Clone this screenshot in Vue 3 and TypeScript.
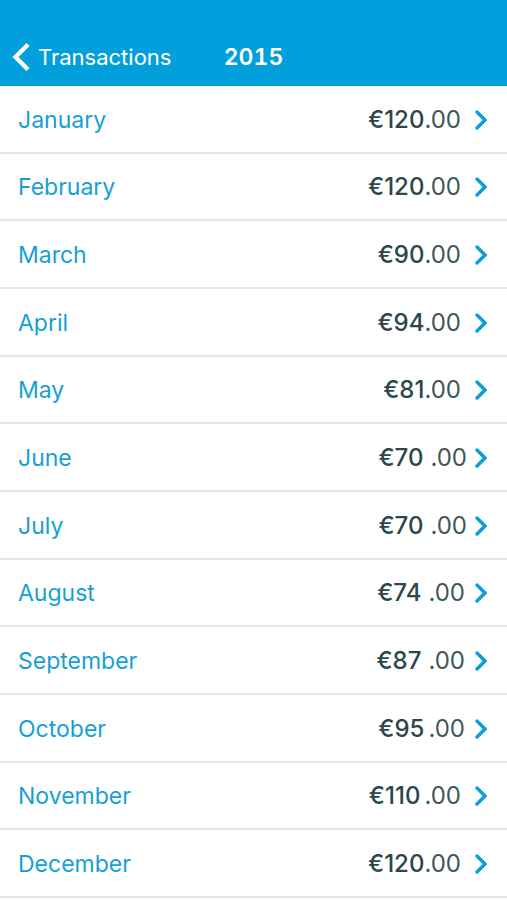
<script setup lang="ts">
interface MonthEntry {
  name: string
  whole: string
  spacing: string
}

const months: MonthEntry[] = [
  { name: 'January', whole: '120', spacing: '' },
  { name: 'February', whole: '120', spacing: '' },
  { name: 'March', whole: '90', spacing: '' },
  { name: 'April', whole: '94', spacing: '' },
  { name: 'May', whole: '81', spacing: '' },
  { name: 'June', whole: '70', spacing: 'wide near' },
  { name: 'July', whole: '70', spacing: 'wide near' },
  { name: 'August', whole: '74', spacing: 'wide middle' },
  { name: 'September', whole: '87', spacing: 'wide middle' },
  { name: 'October', whole: '95', spacing: 'thin middle' },
  { name: 'November', whole: '110', spacing: 'thin' },
  { name: 'December', whole: '120', spacing: '' },
]
</script>

<template>
  <div class="screen">
    <header class="bar">
      <a class="back" href="#">
        <svg class="back-icon" viewBox="0 0 18 28" aria-hidden="true">
          <path d="M16 1.5 3.5 14 16 26.5" />
        </svg>
        <span>Transactions</span>
      </a>
      <h1 class="title">2015</h1>
    </header>
    <main class="content">
      <ul class="months">
        <li v-for="month in months" :key="month.name" class="item">
          <a class="row" href="#">
            <span class="name">{{ month.name }}</span>
            <span class="amount" :class="month.spacing">
              <span class="whole">€{{ month.whole }}</span><span class="cents">.00</span>
            </span>
            <svg class="chevron" viewBox="0 0 12 20" aria-hidden="true">
              <path d="m2 2 8 8-8 8" />
            </svg>
          </a>
        </li>
      </ul>
    </main>
  </div>
</template>

<style>
body {
  background: #fff;
}
</style>

<style scoped>
.screen {
  display: flex;
  flex-direction: column;
  min-height: 100vh;
  font-family: Inter, Roboto, sans-serif;
  font-size: 23px;
  line-height: 28px;
}
.bar {
  display: grid;
  grid-template-columns: 1fr auto 1fr;
  align-items: center;
  padding: 43px 12px 15px;
  background: #019fdc;
  color: #fff;
}
.back {
  display: flex;
  align-items: center;
  gap: 8px;
  color: inherit;
  font-size: 22px;
  text-decoration: none;
}
.back-icon {
  width: 18px;
  height: 28px;
  fill: none;
  stroke: currentColor;
  stroke-width: 4.4px;
}
.title {
  margin: 0;
  font-size: 23px;
  font-weight: 600;
  font-variant-numeric: tabular-nums;
}
.content {
  display: flex;
  flex: 1;
  padding-bottom: 2px;
}
.months {
  display: grid;
  flex: 1;
  grid-auto-rows: 1fr;
  margin: 0;
  padding: 0;
  list-style: none;
}
.item {
  display: flex;
  border-bottom: 2px solid #e5e5e7;
}
.row {
  display: flex;
  flex: 1;
  align-items: center;
  padding: 18px 20px 16px 18px;
  color: #179fd5;
  text-decoration: none;
}
.name {
  flex: 1;
}
.amount {
  display: flex;
  margin-right: 14px;
  color: #2b474b;
  font-size: 24px;
}
.whole {
  font-weight: 500;
}
.cents {
  color: #3f5759;
}
.wide {
  gap: 7px;
}
.thin {
  gap: 4px;
}
.near {
  margin-right: 8px;
}
.middle {
  margin-right: 10px;
}
.chevron {
  width: 12px;
  height: 20px;
  fill: none;
  stroke: #0c9ddb;
  stroke-width: 3.4px;
  stroke-linecap: round;
}
</style>
